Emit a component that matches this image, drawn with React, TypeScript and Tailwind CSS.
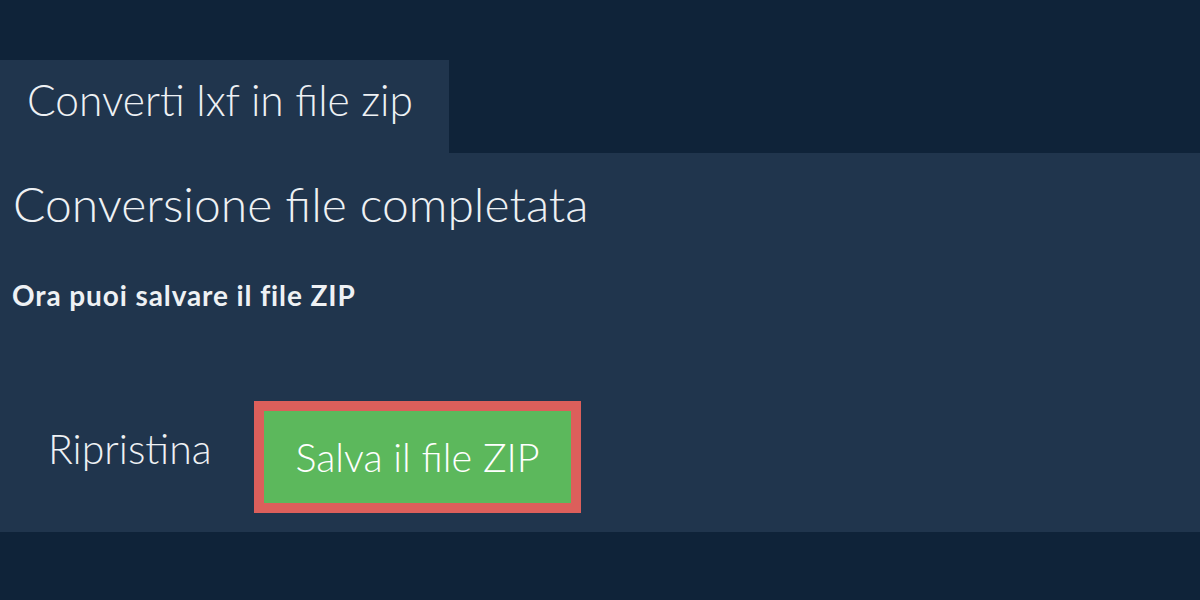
export default function App() {
  return (
    <div className="w-[1200px] h-[600px] bg-[#0f2339] pt-[60px] text-[#eef1f4]" style={{ fontFamily: "Lato, 'Open Sans', sans-serif" }}>
      <div className="w-[449px] h-[93px] bg-[#20354d] pl-[27px] pt-[19px]">
        <span className="block text-[42.5px] font-light leading-none">Converti lxf in file zip</span>
      </div>
      <div className="h-[379px] bg-[#20354d] px-[13px] pt-[26.5px]">
        <h1 className="text-[48px] font-light leading-none">Conversione file completata</h1>
        <p className="-ml-[1px] mt-[53px] text-[28px] font-bold leading-none tracking-[0.9px]">Ora puoi salvare il file ZIP</p>
        <div className="mt-[92px] flex items-start">
          <span className="ml-[35px] mt-[27px] w-[206px] text-[41px] font-light leading-none">Ripristina</span>
          <button className="w-[327px] h-[112px] border-[10px] border-[#dc5f5b] bg-[#5cb85c] text-[39.5px] font-light text-white flex items-center justify-center">
            Salva il file ZIP
          </button>
        </div>
      </div>
    </div>
  );
}
